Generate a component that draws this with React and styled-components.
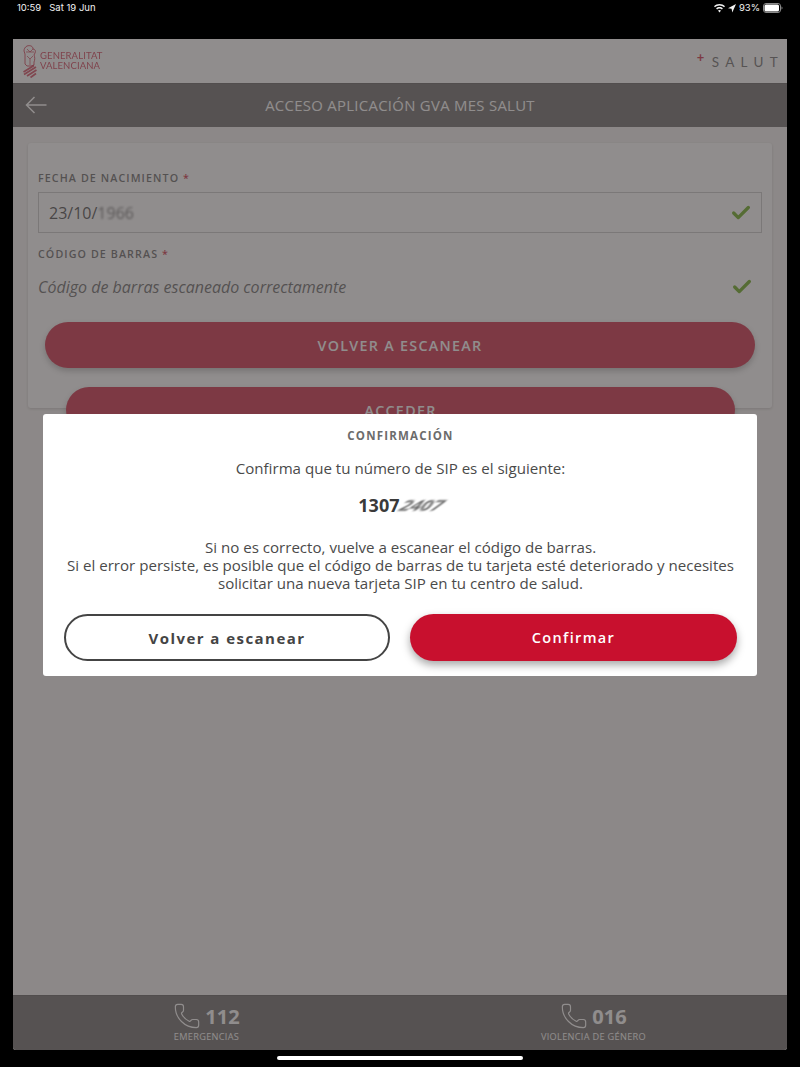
import React from "react";
import styled, { createGlobalStyle } from "styled-components";
import { Check, Phone } from "lucide-react";

const GlobalStyle = createGlobalStyle`
  html, body {
    margin: 0;
    padding: 0;
    background: #000;
  }
  * {
    box-sizing: border-box;
  }
`;

const Page = styled.div`
  width: 800px;
  height: 1067px;
  display: flex;
  flex-direction: column;
  background: #000;
  font-family: "Open Sans", "Liberation Sans", sans-serif;
  overflow: hidden;
`;

const StatusBar = styled.div`
  height: 39px;
  flex: none;
  display: flex;
  justify-content: space-between;
  align-items: flex-start;
  padding: 2px 17px 0 17px;
  color: #f2f2f2;
  font-family: "Inter", "Liberation Sans", sans-serif;
  font-size: 9.5px;
  line-height: 12px;
`;

const StatusLeft = styled.div`
  display: flex;
  gap: 8px;
`;

const StatusRight = styled.div`
  display: flex;
  align-items: center;
  gap: 3px;
`;

const Window = styled.div`
  position: relative;
  flex: 1;
  margin: 0 13px;
  display: flex;
  flex-direction: column;
  background: #f3f1f0;
  border-radius: 0 0 3px 3px;
  overflow: hidden;
`;

const HomeBar = styled.div`
  height: 17px;
  flex: none;
  display: flex;
  justify-content: center;
  align-items: center;
  padding-bottom: 1px;
  &::after {
    content: "";
    width: 246px;
    height: 4px;
    border-radius: 2px;
    background: #fff;
  }
`;

const Header = styled.header`
  height: 44px;
  flex: none;
  display: flex;
  justify-content: space-between;
  align-items: center;
  padding: 0 9px 0 10px;
  background: #fff;
`;

const Logo = styled.div`
  display: flex;
  align-items: center;
  gap: 3px;
`;

const LogoText = styled.div`
  color: #c8102e;
  font-family: "Lato", "Liberation Sans", sans-serif;
  font-size: 9.5px;
  line-height: 10.5px;
  letter-spacing: 0.1px;
  opacity: 0.9;
`;

const Salut = styled.div`
  position: relative;
  top: 1px;
  color: #5a5a5a;
  font-family: "Lato", "Liberation Sans", sans-serif;
  font-size: 13.5px;
  letter-spacing: 6.3px;
  padding-left: 15px;
  margin-right: -6px;
  &::before {
    content: "+";
    position: absolute;
    left: 0;
    top: -5px;
    color: #c8102e;
    font-size: 13px;
    font-weight: 700;
    letter-spacing: 0;
  }
`;

const NavBar = styled.div`
  position: relative;
  height: 44px;
  flex: none;
  padding-bottom: 1px;
  display: flex;
  justify-content: center;
  align-items: center;
  background: #5b5756;
  border-top: 1px solid #4f4c4c;
  color: #fff;
  font-size: 14.9px;
  letter-spacing: 0.02em;
`;

const BackIcon = styled.svg`
  position: absolute;
  left: 12px;
  top: 12px;
`;

const Content = styled.main`
  flex: 1;
  padding: 16px 15px;
  min-height: 0;
`;

const Card = styled.section`
  height: 265px;
  padding: 28px 10px 0;
  background: #fff;
  border-radius: 3px;
  box-shadow: 0 1px 3px rgba(0, 0, 0, 0.2);
`;

const Label = styled.div`
  color: #555;
  font-size: 10.7px;
  font-weight: 600;
  line-height: 14px;
  letter-spacing: 1.1px;
  span {
    color: #c8102e;
  }
`;

const DateField = styled.div`
  height: 41px;
  margin: 7px 0 14px;
  padding: 0 9px 0 10px;
  display: flex;
  justify-content: space-between;
  align-items: center;
  border: 1px solid #c4c2c2;
  color: #333;
  font-size: 16px;
`;

const Blurred = styled.span`
  display: inline-block;
  filter: blur(1.2px);
  opacity: 0.75;
`;

const ScanRow = styled.div`
  height: 36px;
  margin-top: 8px;
  padding-right: 9px;
  display: flex;
  justify-content: space-between;
  align-items: center;
  color: #555;
  font-size: 16px;
  font-style: italic;
`;

const OkIcon = styled(Check)`
  color: #58a000;
  display: block;
`;

const CardButton = styled.div`
  height: 46px;
  margin: ${(p) => (p.$inset ? "19px 27px 0 28px" : "17px 7px 0")};
  display: flex;
  justify-content: center;
  align-items: center;
  background: #c8102e;
  border-radius: 23px;
  box-shadow: 0 3px 6px rgba(0, 0, 0, 0.3);
  color: #fff;
  font-size: 14.3px;
  font-weight: 600;
  letter-spacing: 1.3px;
`;

const Footer = styled.footer`
  height: 55px;
  flex: none;
  display: grid;
  grid-template-columns: 1fr 1fr;
  background: #5b5756;
  color: #fff;
  border-top: 1px solid #4c4949;
`;

const Emergency = styled.div`
  display: flex;
  flex-direction: column;
  align-items: center;
  padding-top: 7px;
`;

const EmergencyNumber = styled.div`
  display: flex;
  align-items: center;
  gap: 4px;
  height: 26px;
  font-size: 20px;
  font-weight: 700;
`;

const EmergencyLabel = styled.div`
  margin-top: 2px;
  font-size: 9.2px;
  line-height: 12px;
  letter-spacing: 0.3px;
`;

const Backdrop = styled.div`
  position: absolute;
  inset: 0;
  background: rgba(84, 80, 80, 0.65);
`;

const Modal = styled.div`
  position: absolute;
  top: 375px;
  left: 30px;
  width: 714px;
  height: 262px;
  padding: 14px 20px 0 21px;
  background: #fff;
  border-radius: 3px;
  color: #4a4a4a;
  text-align: center;
  font-size: 15.1px;
  line-height: 18px;
`;

const ModalTitle = styled.h2`
  margin: 0;
  color: #6c6c6c;
  font-size: 11.5px;
  font-weight: 700;
  line-height: 15px;
  letter-spacing: 1.2px;
`;

const ModalText = styled.p`
  margin: ${(p) => p.$margin || "0"};
`;

const SipNumber = styled.div`
  margin-top: 18px;
  height: 20px;
  display: flex;
  justify-content: center;
  align-items: center;
  color: #3a3a3a;
  font-size: 18px;
  font-weight: 700;
`;

const SipStreak = styled.span`
  display: inline-block;
  color: #444;
  transform: skewX(-40deg) scaleY(0.8);
  filter: blur(0.8px);
  opacity: 0.8;
  margin-left: 2px;
  letter-spacing: 0;
`;

const ModalActions = styled.div`
  margin-top: 22px;
  display: grid;
  grid-template-columns: 326px 327px;
  column-gap: 20px;
`;

const ModalButton = styled.div`
  height: 47px;
  display: flex;
  justify-content: center;
  align-items: center;
  border-radius: 24px;
  font-size: ${(p) => (p.$primary ? "14.5px" : "15px")};
  letter-spacing: ${(p) => (p.$primary ? "1.35px" : "1.45px")};
  font-weight: ${(p) => (p.$primary ? 600 : 700)};
  color: ${(p) => (p.$primary ? "#fff" : "#444")};
  background: ${(p) => (p.$primary ? "#c8102e" : "#fff")};
  border: ${(p) => (p.$primary ? "none" : "2px solid #444")};
  box-shadow: ${(p) => (p.$primary ? "0 4px 8px rgba(0, 0, 0, 0.35)" : "none")};
`;

const Crest = () => (
  <svg width="14" height="33" viewBox="0 0 14 33" fill="none" stroke="#c8102e" strokeOpacity="0.85">
    <path d="M4 1c3-1 6 0 6 3 2 0 3 2 2 4l-1 2c1 2 1 5 0 7v3l-3 1H4l-2-2V9L1 6c0-2 1-4 3-5z" strokeWidth="1" />
    <path d="M3 7h8M4 4l3 3 3-3M4 11l3 3 3-3M7 14v6" strokeWidth="0.8" />
    <path d="M0.500 27 11 20.500M1 29.500 13 22M4 31l9.500-6M7.500 32.500l5.500-4" strokeWidth="1.700" />
  </svg>
);

const Wifi = () => (
  <svg width="11" height="9" viewBox="0 0 11 9" fill="#f2f2f2">
    <path d="M5.500 0C3.400 0 1.500.8 0 2.200l1 1.100C2.200 2.200 3.800 1.500 5.500 1.500s3.300.7 4.500 1.800l1-1.100C9.500.8 7.600 0 5.500 0z" />
    <path d="M5.500 3C4.200 3 3 3.500 2.100 4.400l1 1.100c.6-.6 1.500-1 2.400-1s1.800.4 2.400 1l1-1.100C8 3.500 6.800 3 5.500 3z" />
    <path d="M5.500 6c-.6 0-1.100.2-1.500.6L5.500 8.400 7 6.600C6.600 6.200 6.100 6 5.500 6z" />
  </svg>
);

const LocationArrow = () => (
  <svg width="8" height="9" viewBox="0 0 8 9" fill="#f2f2f2">
    <path d="M8 0 0 4.200l3.600.6.700 3.800z" />
  </svg>
);

const Battery = () => (
  <svg width="20" height="10" viewBox="0 0 20 10">
    <rect x="0.500" y="0.500" width="17" height="9" rx="2.500" fill="none" stroke="#8a8a8a" />
    <rect x="1.500" y="1.500" width="14.500" height="7" rx="1.500" fill="#fff" />
    <path d="M18.500 3.500c.8.300 1 .9 1 1.500s-.2 1.200-1 1.500z" fill="#8a8a8a" />
  </svg>
);

const emergencies = [
  { number: "112", label: "EMERGENCIAS" },
  { number: "016", label: "VIOLENCIA DE GÉNERO" },
];

const App = () => {
  return (
    <Page>
      <GlobalStyle />
      <StatusBar>
        <StatusLeft>
          <span>10:59</span>
          <span>Sat 19 Jun</span>
        </StatusLeft>
        <StatusRight>
          <Wifi />
          <LocationArrow />
          <span>93%</span>
          <Battery />
        </StatusRight>
      </StatusBar>

      <Window>
        <Header>
          <Logo>
            <Crest />
            <LogoText>
              GENERALITAT
              <br />
              VALENCIANA
            </LogoText>
          </Logo>
          <Salut>SALUT</Salut>
        </Header>
        <NavBar>
          <BackIcon width="22" height="18" viewBox="0 0 22 18" fill="none" stroke="#fff" strokeWidth="1.500">
            <path d="M21.500 9H1.500M9.500 1 1.500 9l8 8" />
          </BackIcon>
          ACCESO APLICACIÓN GVA MES SALUT
        </NavBar>

        <Content>
          <Card>
            <Label>
              FECHA DE NACIMIENTO <span>*</span>
            </Label>
            <DateField>
              <span>
                23/10/<Blurred>1966</Blurred>
              </span>
              <OkIcon size={22} strokeWidth={3.6} />
            </DateField>
            <Label>
              CÓDIGO DE BARRAS <span>*</span>
            </Label>
            <ScanRow>
              Código de barras escaneado correctamente
              <OkIcon size={22} strokeWidth={3.6} />
            </ScanRow>
            <CardButton>VOLVER A ESCANEAR</CardButton>
            <CardButton $inset>ACCEDER</CardButton>
          </Card>
        </Content>

        <Footer>
          {emergencies.map((item) => (
            <Emergency key={item.number}>
              <EmergencyNumber>
                <Phone size={28} strokeWidth={1} />
                {item.number}
              </EmergencyNumber>
              <EmergencyLabel>{item.label}</EmergencyLabel>
            </Emergency>
          ))}
        </Footer>

        <Backdrop />

        <Modal>
          <ModalTitle>CONFIRMACIÓN</ModalTitle>
          <ModalText $margin="16px 0 0">Confirma que tu número de SIP es el siguiente:</ModalText>
          <SipNumber>
            1307<SipStreak>2407</SipStreak>
          </SipNumber>
          <ModalText $margin="23px 0 0">
            Si no es correcto, vuelve a escanear el código de barras.
            <br />
            Si el error persiste, es posible que el código de barras de tu tarjeta esté deteriorado y necesites
            <br />
            solicitar una nueva tarjeta SIP en tu centro de salud.
          </ModalText>
          <ModalActions>
            <ModalButton>Volver a escanear</ModalButton>
            <ModalButton $primary>Confirmar</ModalButton>
          </ModalActions>
        </Modal>
      </Window>
      <HomeBar />
    </Page>
  );
};

export default App;
